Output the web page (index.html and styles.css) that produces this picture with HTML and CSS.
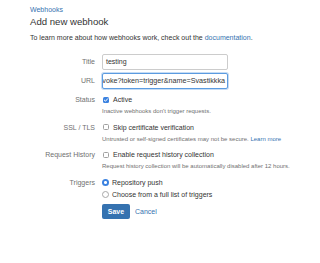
FILE: index.html
```html
<!DOCTYPE html>
<html lang="en">
<head>
<meta charset="utf-8">
<title>Add new webhook</title>
<link rel="stylesheet" href="styles.css">
</head>
<body>
<main class="page">
  <a class="crumb" href="#">Webhooks</a>
  <h1 class="title">Add new webhook</h1>
  <p class="intro">To learn more about how webhooks work, check out the <a href="#">documentation</a>.</p>

  <form class="form">
    <div class="row row-input">
      <label class="label">Title</label>
      <div class="field"><div class="input">testing</div></div>
    </div>
    <div class="row row-input row-url">
      <label class="label">URL</label>
      <div class="field"><div class="input input-focus"><span class="url">voke?token=trigger&amp;name=Svastikkka</span></div></div>
    </div>

    <div class="row row-check row-status">
      <span class="label">Status</span>
      <div class="field">
        <div class="opt"><span class="box box-on"><svg viewBox="0 0 6 6" width="6" height="6"><path d="M1.3 3.1 L2.5 4.2 L4.7 1.7" fill="none" stroke="#fff" stroke-width="1" stroke-linecap="round" stroke-linejoin="round"/></svg></span>Active</div>
        <div class="hint">Inactive webhooks don't trigger requests.</div>
      </div>
    </div>

    <div class="row row-check">
      <span class="label">SSL / TLS</span>
      <div class="field">
        <div class="opt"><span class="box"></span>Skip certificate verification</div>
        <div class="hint">Untrusted or self-signed certificates may not be secure. <a href="#">Learn more</a></div>
      </div>
    </div>

    <div class="row row-check">
      <span class="label">Request History</span>
      <div class="field">
        <div class="opt"><span class="box"></span>Enable request history collection</div>
        <div class="hint">Request history collection will be automatically disabled after 12 hours.</div>
      </div>
    </div>

    <div class="row row-triggers">
      <span class="label">Triggers</span>
      <div class="field">
        <div class="opt"><span class="radio radio-on"></span>Repository push</div>
        <div class="opt opt-second"><span class="radio"></span>Choose from a full list of triggers</div>
        <div class="actions">
          <button type="button" class="btn">Save</button>
          <a href="#" class="cancel">Cancel</a>
        </div>
      </div>
    </div>
  </form>
</main>
</body>
</html>
```

FILE: styles.css
```css
* { box-sizing: border-box; }

html, body {
  margin: 0;
  background: #fff;
}

body {
  font-family: "Liberation Sans", Arial, sans-serif;
  font-size: 7px;
  color: #333;
}

a { color: #3572b0; text-decoration: none; }

.page {
  padding: 6px 0 0 30px;
}

.crumb {
  display: block;
  line-height: 8px;
  font-size: 7px;
}

.title {
  margin: 2px 0 0;
  font-size: 9.6px;
  line-height: 12px;
  font-weight: normal;
  color: #333;
}

.intro {
  margin: 6px 0 0;
  line-height: 8px;
}

.form {
  margin-top: 12px;
  width: 198px;
}

.row {
  display: grid;
  grid-template-columns: 65px 126px;
  column-gap: 7px;
  align-items: start;
}

.label {
  text-align: right;
  color: #707070;
  line-height: 9px;
}

.row-input .label { line-height: 16px; }

.row-url { margin-top: 3px; }

.input {
  height: 16px;
  border: 1px solid #ccc;
  border-radius: 2px;
  padding: 0 3px;
  line-height: 14px;
  background: #fff;
  color: #333;
  overflow: hidden;
  white-space: nowrap;
}

.input-focus {
  display: flex;
  justify-content: flex-end;
  border-color: #5b9be0;
  box-shadow: 0 0 0 1px rgba(91, 155, 224, 0.35);
  padding: 0 2px;
}

.url { font-size: 7.2px; }

.row-status { margin-top: 6px; }
.row-check + .row-check { margin-top: 7.5px; }
.row-triggers { margin-top: 7.5px; }

.opt {
  display: flex;
  align-items: center;
  gap: 4px;
  line-height: 9px;
  color: #333;
  white-space: nowrap;
}

.opt-second { margin-top: 3.5px; }

.hint {
  margin-top: 3px;
  font-size: 6px;
  line-height: 8px;
  color: #707070;
  white-space: nowrap;
}

.box {
  width: 6px;
  height: 6px;
  flex: none;
  margin-left: 1px;
  border: 1px solid #a0a0a0;
  border-radius: 1.5px;
  background: #fff;
  display: flex;
}

.box-on {
  border: none;
  background: #3b82e0;
}

.radio {
  width: 7px;
  height: 7px;
  flex: none;
  border: 1px solid #a8a8a8;
  border-radius: 50%;
  background: #fff;
  margin-right: -1px;
}

.radio-on {
  border: none;
  background: radial-gradient(circle, #fff 0 1.3px, #3b82e0 1.6px);
}

.actions {
  display: flex;
  align-items: center;
  gap: 5px;
  margin-top: 5px;
}

.btn {
  font-family: inherit;
  font-size: 7px;
  font-weight: bold;
  color: #fff;
  background: #3572b0;
  border: none;
  border-radius: 2px;
  height: 15px;
  width: 28px;
  padding: 0;
}

.cancel { line-height: 15px; }
```
